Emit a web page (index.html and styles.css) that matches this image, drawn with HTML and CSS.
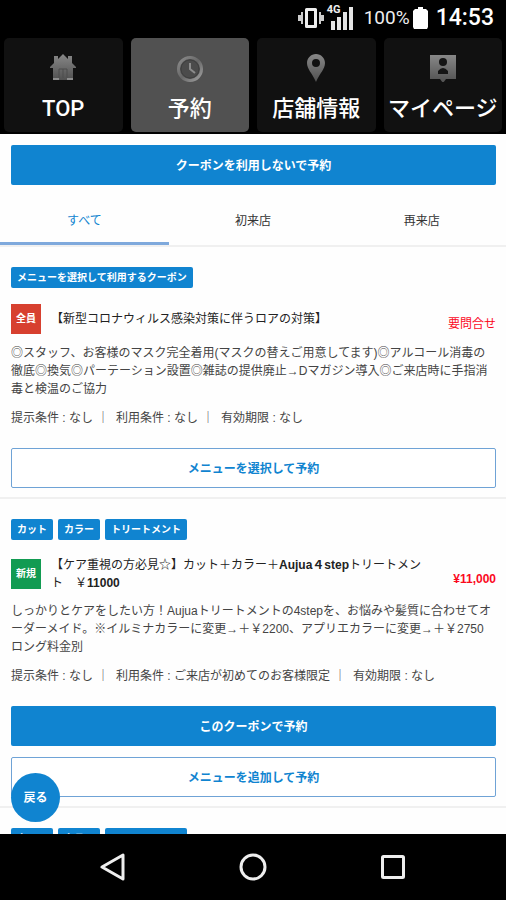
FILE: index.html
```html
<!DOCTYPE html>
<html lang="ja">
<head>
<meta charset="utf-8">
<meta name="viewport" content="width=device-width, initial-scale=1">
<title>予約</title>
<link rel="stylesheet" href="styles.css">
</head>
<body>
<div class="screen">
  <header class="status">
    <svg class="vibrate" viewBox="0 0 26 22" width="26" height="22" aria-hidden="true">
      <path d="M8.500 2.500h9v17h-9z" fill="none" stroke="#eee" stroke-width="3" stroke-linejoin="round"/>
      <path d="M5 5v12H3v-3H0V8h3V5zM21 5v12h2v-3h3V8h-3V5z" fill="#ccc"/>
    </svg>
    <span class="signal">
      <span class="signal-type">4G</span>
      <svg viewBox="0 0 22 24" width="22" height="24" aria-hidden="true">
        <path d="M0 15h4v9H0zM6 11h4v13H6zM12 6h4v18h-4zM18 1h4v23h-4z" fill="#e4e4e4"/>
      </svg>
    </span>
    <span class="charge">100%</span>
    <svg class="battery" viewBox="0 0 15 22" width="15" height="22" aria-hidden="true">
      <path d="M5 0h5v2h3l2 2v16l-1 2H1l-1-2V4l2-2h3z" fill="#fff"/>
    </svg>
    <span class="clock">14:53</span>
  </header>

  <nav class="menu">
    <a class="menu-item" href="#top">
      <svg viewBox="0 0 28 28" width="28" height="28" aria-hidden="true">
        <defs><linearGradient id="metal" x1="0" y1="0" x2="0" y2="1"><stop offset="0" stop-color="#888"/><stop offset="1" stop-color="#505050"/></linearGradient></defs>
        <path d="M14 0 9 5V2H5v7L1 13v1h3v12h20V14h3v-1l-4-4V2h-4v3z" fill="url(#metal)"/>
        <path d="M10 24v-9h8v9M14 15v9" fill="none" stroke="#4c4c4c" stroke-width="1"/>
        <path d="M4 25h6M18 25h6" stroke="#8c8c8c" stroke-width="2"/>
      </svg>
      <span>TOP</span>
    </a>
    <a class="menu-item current" href="#reserve" aria-current="page">
      <svg viewBox="0 0 28 28" width="28" height="28" aria-hidden="true">
        <defs><linearGradient id="ring" x1="0" y1="0" x2="1" y2="1"><stop offset="0" stop-color="#8c8c8c"/><stop offset=".5" stop-color="#686868"/><stop offset="1" stop-color="#a0a0a0"/></linearGradient></defs>
        <circle cx="14" cy="15" r="11.500" fill="#4b4b4b" stroke="url(#ring)" stroke-width="3"/>
        <circle cx="14" cy="15" r="9" fill="none" stroke="#3f3f3f"/>
        <path d="M14 9v6l5 4" fill="none" stroke="#8c8c8c" stroke-width="2"/>
      </svg>
      <span>予約</span>
    </a>
    <a class="menu-item" href="#shop">
      <svg viewBox="0 0 28 28" width="28" height="28" aria-hidden="true">
        <path fill-rule="evenodd" d="M14 0c-5 0-9 4-9 9 0 6 5 10 9 19 4-9 9-13 9-19 0-5-4-9-9-9zm0 5a4 4 0 1 1 0 8 4 4 0 0 1 0-8z" fill="url(#metal)"/>
      </svg>
      <span>店舗情報</span>
    </a>
    <a class="menu-item" href="#mypage">
      <svg viewBox="0 0 28 28" width="28" height="28" aria-hidden="true">
        <path d="M1 1h26v24H17l-3 4-3-4H1z" fill="url(#metal)"/>
        <circle cx="14" cy="8" r="4" fill="#151515"/>
        <path d="M9 20v-3q5-6 10 0v3z" fill="#151515"/>
      </svg>
      <span>マイページ</span>
    </a>
  </nav>

  <main class="content">
    <div class="intro"><button class="button filled" type="button">クーポンを利用しないで予約</button></div>

    <div class="tabs" role="tablist">
      <button class="tab" type="button" role="tab" aria-selected="true">すべて</button>
      <button class="tab" type="button" role="tab" aria-selected="false">初来店</button>
      <button class="tab" type="button" role="tab" aria-selected="false">再来店</button>
    </div>

    <article class="coupon">
      <div class="tags"><span class="tag">メニューを選択して利用するクーポン</span></div>
      <div class="heading">
        <span class="badge everyone">全員</span>
        <h2 class="title">【新型コロナウィルス感染対策に伴うロアの対策】</h2>
        <span class="price inquiry">要問合せ</span>
      </div>
      <p class="text">◎スタッフ、お客様のマスク完全着用(マスクの替えご用意してます)◎アルコール消毒の徹底◎換気◎パーテーション設置◎雑誌の提供廃止→Dマガジン導入◎ご来店時に手指消毒と検温のご協力</p>
      <p class="terms">提示条件 : なし<span class="bar">｜</span>利用条件 : なし<span class="bar">｜</span>有効期限 : なし</p>
      <div class="actions"><button class="button outlined" type="button">メニューを選択して予約</button></div>
    </article>

    <article class="coupon">
      <div class="tags"><span class="tag">カット</span><span class="tag">カラー</span><span class="tag">トリートメント</span></div>
      <div class="heading">
        <span class="badge newcomer">新規</span>
        <h2 class="title">【ケア重視の方必見☆】カット＋カラー＋<b>Aujua４step</b>トリートメント　￥<b>11000</b></h2>
        <span class="price">¥11,000</span>
      </div>
      <p class="text">しっかりとケアをしたい方！Aujuaトリートメントの4stepを、お悩みや髪質に合わせてオーダーメイド。※イルミナカラーに変更→＋￥2200、アプリエカラーに変更→＋￥2750<br>ロング料金別</p>
      <p class="terms">提示条件 : なし<span class="bar">｜</span>利用条件 : ご来店が初めてのお客様限定<span class="bar">｜</span>有効期限 : なし</p>
      <div class="actions">
        <button class="button filled" type="button">このクーポンで予約</button>
        <button class="button outlined" type="button">メニューを追加して予約</button>
      </div>
    </article>

    <article class="coupon">
      <div class="tags"><span class="tag">カット</span><span class="tag">カラー</span><span class="tag">トリートメント</span></div>
    </article>

    <button class="back" type="button">戻る</button>
  </main>

  <footer class="system">
    <button class="key" type="button" aria-label="戻る">
      <svg viewBox="0 0 28 28" width="28" height="28"><path d="M24 2v24L3 14z" fill="none" stroke="#eee" stroke-width="3" stroke-linejoin="round"/></svg>
    </button>
    <button class="key" type="button" aria-label="ホーム">
      <svg viewBox="0 0 28 28" width="28" height="28"><circle cx="14" cy="14" r="12" fill="none" stroke="#eee" stroke-width="3"/></svg>
    </button>
    <button class="key" type="button" aria-label="履歴">
      <svg viewBox="0 0 28 28" width="28" height="28"><rect x="3.500" y="3.500" width="21" height="21" rx="1" fill="none" stroke="#eee" stroke-width="3"/></svg>
    </button>
  </footer>
</div>
</body>
</html>
```
FILE: styles.css
```css
* {
  box-sizing: border-box;
}

body,
h2,
p {
  margin: 0;
}

body {
  background: #000;
  color: #444;
  font: 12px/18px "Liberation Sans", "Noto Sans CJK JP", sans-serif;
}

button {
  border: 0;
  padding: 0;
  background: none;
  color: inherit;
  font: inherit;
}

svg {
  display: block;
}

.screen {
  display: flex;
  flex-direction: column;
  height: 100vh;
}

/* Device status bar */
.status {
  display: flex;
  flex: none;
  align-items: center;
  justify-content: flex-end;
  height: 38px;
  padding: 0 12px 2px 0;
  color: #eee;
  font-family: Roboto, sans-serif;
}

.signal {
  position: relative;
  margin: 0 11px 0 7px;
}

.signal-type {
  position: absolute;
  top: -2px;
  left: -4px;
  background: #000;
  font-size: 11px;
  font-weight: 700;
  line-height: 12px;
}

.charge {
  font-size: 19px;
}

.battery {
  margin: 0 8px 0 3px;
}

.clock {
  color: #fff;
  font-size: 23px;
  font-weight: 500;
}

/* Main navigation */
.menu {
  display: grid;
  flex: none;
  grid-template-columns: repeat(4, 1fr);
  gap: 8px;
  padding: 0 4px 2px;
}

.menu-item {
  display: flex;
  flex-direction: column;
  align-items: center;
  gap: 13px;
  height: 94px;
  padding-top: 16px;
  border-radius: 5px;
  background: #111;
  color: #fff;
  font: 500 22px/28px Roboto, "Noto Sans CJK JP", sans-serif;
  text-decoration: none;
  white-space: nowrap;
}

.menu-item.current {
  background: #515151;
}

/* Coupon list */
.content {
  position: relative;
  flex: 1;
  min-height: 0;
  overflow: hidden;
  background: #fefefe;
}

.intro {
  padding: 11px 10px 10px 11px;
}

.button {
  display: block;
  width: 100%;
  height: 40px;
  padding-top: 2px;
  border-radius: 2px;
  font-weight: 700;
}

.filled {
  background: #1084d0;
  color: #fff;
}

.outlined {
  border: 1px solid #6fa3d6;
  background: #fff;
  color: #1084d0;
}

.tabs {
  display: grid;
  grid-template-columns: repeat(3, 1fr);
  border-bottom: 2px solid #f0f0f0;
}

.tab {
  height: 50px;
  padding-top: 4px;
  border-bottom: 3px solid transparent;
  color: #333;
}

.tab[aria-selected="true"] {
  border-color: #7fa9dc;
  color: #1084d0;
}

.coupon {
  padding: 20px 10px 9px 11px;
  border-bottom: 2px solid #f0f0f0;
}

.tags {
  display: flex;
  gap: 5px;
}

.tag {
  padding: 0 6px;
  border-radius: 2px;
  background: #1084d0;
  color: #fff;
  font-size: 10px;
  font-weight: 700;
  line-height: 21px;
}

.heading {
  display: flex;
  align-items: center;
  margin: 16px 0 10px;
}

.badge {
  flex: none;
  width: 30px;
  color: #fff;
  font-size: 10px;
  font-weight: 700;
  line-height: 30px;
  text-align: center;
}

.everyone {
  background: #d7402f;
}

.newcomer {
  background: #129b52;
}

.title {
  flex: 1;
  padding: 0 24px 0 10px;
  color: #222;
  font-size: 12px;
  font-weight: 400;
}

.price {
  padding-top: 10px;
  color: #fb0a1e;
  font-weight: 700;
}

.inquiry {
  font-weight: 400;
}

.terms {
  margin: 11px 0 21px;
}

.bar {
  margin: 0 7px 0 4px;
}

.actions {
  display: grid;
  gap: 11px;
}

.back {
  position: absolute;
  bottom: 12px;
  left: 11px;
  width: 49px;
  height: 49px;
  border-radius: 50%;
  background: #1084d0;
  color: #fff;
  font-weight: 700;
}

/* Device navigation keys */
.system {
  display: flex;
  flex: none;
  align-items: center;
  justify-content: center;
  gap: 112px;
  height: 66px;
}
```
